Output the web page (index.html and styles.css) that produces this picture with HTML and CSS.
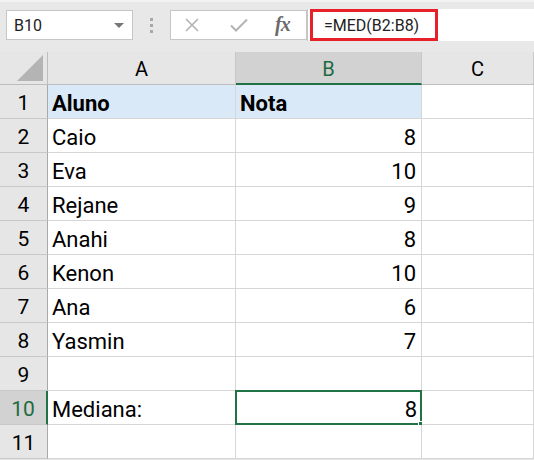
FILE: index.html
```html
<!DOCTYPE html>
<html>
<head>
<meta charset="utf-8">
<link rel="stylesheet" href="styles.css">
</head>
<body>
<div class="toolbar">
  <div class="namebox"><span class="nb-text">B10</span><span class="nb-arrow"></span></div>
  <div class="dots"><span></span><span></span><span></span></div>
  <div class="fbtns">
    <svg class="ic-x" width="16" height="16" viewBox="0 0 16 16"><path d="M2 2 L14 14 M14 2 L2 14" stroke="#b3b3b3" stroke-width="1.6" fill="none"/></svg>
    <svg class="ic-check" width="20" height="16" viewBox="0 0 20 16"><path d="M2 8.5 L7 13.5 L18 2.5" stroke="#b3b3b3" stroke-width="2" fill="none"/></svg>
    <span class="fx">fx</span>
  </div>
  <div class="finput"><span class="formula">=MED(B2:B8)</span></div>
</div>
<div class="sheet">
  <div class="hdr corner"><svg width="28" height="28" viewBox="0 0 28 28"><polygon points="27,1 27,27 1,27" fill="#b4b4b4"/></svg></div>
  <div class="hdr col">A</div>
  <div class="hdr col sel-col">B</div>
  <div class="hdr col">C</div>

  <div class="hdr row">1</div>
  <div class="cell head">Aluno</div>
  <div class="cell head">Nota</div>
  <div class="cell"></div>

  <div class="hdr row">2</div><div class="cell">Caio</div><div class="cell num">8</div><div class="cell"></div>
  <div class="hdr row">3</div><div class="cell">Eva</div><div class="cell num">10</div><div class="cell"></div>
  <div class="hdr row">4</div><div class="cell">Rejane</div><div class="cell num">9</div><div class="cell"></div>
  <div class="hdr row">5</div><div class="cell">Anahi</div><div class="cell num">8</div><div class="cell"></div>
  <div class="hdr row">6</div><div class="cell">Kenon</div><div class="cell num">10</div><div class="cell"></div>
  <div class="hdr row">7</div><div class="cell">Ana</div><div class="cell num">6</div><div class="cell"></div>
  <div class="hdr row">8</div><div class="cell">Yasmin</div><div class="cell num">7</div><div class="cell"></div>
  <div class="hdr row">9</div><div class="cell"></div><div class="cell"></div><div class="cell"></div>
  <div class="hdr row sel-row">10</div><div class="cell">Mediana:</div><div class="cell num selected">8<span class="handle"></span></div><div class="cell"></div>
  <div class="hdr row">11</div><div class="cell"></div><div class="cell"></div><div class="cell"></div>
</div>
</body>
</html>
```
FILE: styles.css
```css
* { box-sizing: border-box; }
html, body { margin: 0; padding: 0; }
body {
  width: 534px;
  height: 460px;
  overflow: hidden;
  background: #e6e6e6;
  font-family: Roboto, "Noto Sans", Arial, sans-serif;
  color: #000;
}
.toolbar {
  height: 52px;
  padding-top: 10px;
  display: flex;
  align-items: flex-start;
  background: #e8e8e8;
  border-top: 2px solid #f2f2f2;
}
.namebox {
  margin-left: 6px;
  width: 127px;
  height: 30px;
  background: #fff;
  border: 1px solid #c6c6c6;
  display: flex;
  align-items: center;
  justify-content: space-between;
  padding: 0 8px 0 7px;
  margin-top: -2px;
}
.nb-text { font-size: 16px; color: #222; }
.nb-arrow {
  width: 0; height: 0;
  border-left: 5px solid transparent;
  border-right: 5px solid transparent;
  border-top: 5px solid #777;
}
.dots {
  width: 37px;
  height: 30px;
  margin-top: -2px;
  display: flex;
  flex-direction: column;
  align-items: center;
  justify-content: center;
  gap: 3px;
}
.dots span { width: 3px; height: 3px; background: #a8a8a8; display: block; }
.fbtns {
  width: 137px;
  height: 30px;
  margin-top: -2px;
  background: #fff;
  border: 1px solid #c6c6c6;
  display: flex;
  align-items: center;
  padding-left: 13px;
}
.ic-x { margin-right: 29px; }
.ic-check { margin-right: 26px; }
.fx {
  font-family: "Liberation Serif", "DejaVu Serif", serif;
  font-style: italic;
  font-weight: bold;
  font-size: 20px;
  color: #6a6a6a;
  letter-spacing: -1px;
  margin-top: -2px;
}
.finput {
  flex: 1;
  height: 32px;
  margin-top: -3px;
  background: #fff;
  border-left: 1px solid #c6c6c6;
  padding-left: 2px;
  display: flex;
  align-items: stretch;
}
.formula {
  width: 128px;
  border: 3px solid #e8202a;
  font-size: 16px;
  color: #222;
  display: flex;
  align-items: center;
  padding-left: 11px;
}
.sheet {
  display: grid;
  grid-template-columns: 48px 188px 186px 112px;
  grid-template-rows: 33px repeat(11, 34px);
}
.hdr {
  background: #e6e6e6;
  font-size: 21px;
  display: flex;
  align-items: center;
  justify-content: center;
}
.corner {
  border-right: 1px solid #bdbdbd;
  border-bottom: 1px solid #bdbdbd;
  justify-content: flex-end;
  align-items: flex-end;
  padding: 0 3px 2px 0;
}
.hdr.col {
  font-size: 20px;
  border-right: 1px solid #c8c8c8;
  border-bottom: 1px solid #bdbdbd;
  padding-top: 2px;
}
.hdr.sel-col {
  background: #d2d2d2;
  color: #1e6b41;
  border-bottom: 2px solid #217346;
}
.hdr.row {
  border-right: 1px solid #a9a9a9;
  border-bottom: 1px solid #c8c8c8;
  padding-top: 2px;
}
.hdr.sel-row {
  background: #d2d2d2;
  color: #1e6b41;
  border-right: 2px solid #217346;
}
.cell {
  background: #fff;
  border-right: 1px solid #d6d6d6;
  border-bottom: 1px solid #d6d6d6;
  font-size: 22px;
  display: flex;
  align-items: center;
  padding: 3px 5px 0 4px;
  position: relative;
}
.cell.head {
  background: #dae9f8;
  font-weight: bold;
}
.cell.num { justify-content: flex-end; }
.cell.selected {
  border: 2px solid #217346;
  margin: -1px 0 0 -1px;
  padding-right: 3px;
}
.handle {
  position: absolute;
  right: -4px;
  bottom: -4px;
  width: 6px;
  height: 6px;
  background: #217346;
  border: 1px solid #fff;
}
```
